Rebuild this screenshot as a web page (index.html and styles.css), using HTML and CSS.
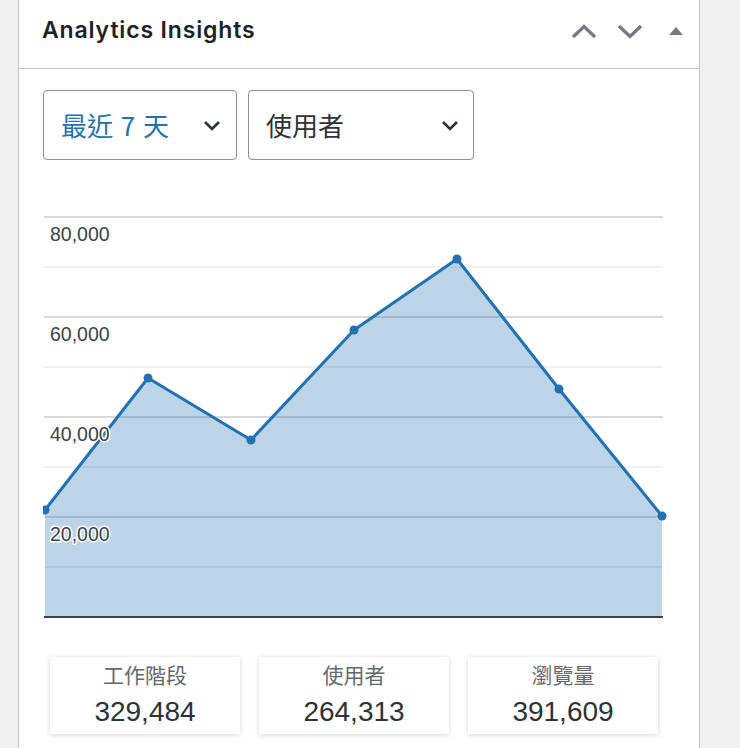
FILE: index.html
```html
<!DOCTYPE html>
<html lang="zh-Hant">
<head>
<meta charset="utf-8">
<title>Analytics Insights</title>
<link rel="stylesheet" href="styles.css">
</head>
<body>
<div class="widget">
  <div class="header">
    <h2 class="title">Analytics Insights</h2>
    <div class="actions">
      <button class="act" aria-label="上移">
        <svg width="26" height="15" viewBox="0 0 26 15"><polyline points="2,13 13,2.5 24,13" fill="none" stroke="#787c82" stroke-width="3.4"/></svg>
      </button>
      <button class="act" aria-label="下移">
        <svg width="26" height="15" viewBox="0 0 26 15"><polyline points="2,2 13,12.5 24,2" fill="none" stroke="#787c82" stroke-width="3.4"/></svg>
      </button>
      <button class="act" aria-label="收合">
        <svg width="16" height="10" viewBox="0 0 16 10"><polygon points="1,9 8,1 15,9" fill="#787c82"/></svg>
      </button>
    </div>
  </div>
  <div class="content">
    <div class="filters">
      <div class="select select-range">
        <span class="select-text blue">最近 7 天</span>
        <svg class="chev" width="18" height="11" viewBox="0 0 18 11"><polyline points="2,2 9,9 16,2" fill="none" stroke="#2c3338" stroke-width="2.6"/></svg>
      </div>
      <div class="select select-metric">
        <span class="select-text">使用者</span>
        <svg class="chev" width="18" height="11" viewBox="0 0 18 11"><polyline points="2,2 9,9 16,2" fill="none" stroke="#2c3338" stroke-width="2.6"/></svg>
      </div>
    </div>
    <svg class="chart" width="630" height="450" viewBox="43 180 630 450">
      <g stroke-width="1.6">
        <line x1="44" y1="217" x2="663" y2="217" stroke="#cccccc"/>
        <line x1="44" y1="267" x2="663" y2="267" stroke="#ebebeb"/>
        <line x1="44" y1="317" x2="663" y2="317" stroke="#cccccc"/>
        <line x1="44" y1="367" x2="663" y2="367" stroke="#ebebeb"/>
        <line x1="44" y1="417" x2="663" y2="417" stroke="#cccccc"/>
        <line x1="44" y1="467" x2="663" y2="467" stroke="#ebebeb"/>
        <line x1="44" y1="517" x2="663" y2="517" stroke="#cccccc"/>
        <line x1="44" y1="567" x2="663" y2="567" stroke="#ebebeb"/>
      </g>
      <polygon points="45,617 45,510 148,378 251,440 354,330 457,259 559,389 662,516 662,617" fill="#2271b1" fill-opacity="0.3"/>
      <polyline points="45,510 148,378 251,440 354,330 457,259 559,389 662,516" fill="none" stroke="#2271b1" stroke-width="3" stroke-linejoin="round"/>
      <g fill="#2271b1">
        <circle cx="45" cy="510" r="4.5"/>
        <circle cx="148" cy="378" r="4.5"/>
        <circle cx="251" cy="440" r="4.5"/>
        <circle cx="354" cy="330" r="4.5"/>
        <circle cx="457" cy="259" r="4.5"/>
        <circle cx="559" cy="389" r="4.5"/>
        <circle cx="662" cy="516" r="4.5"/>
      </g>
      <line x1="44" y1="617" x2="663" y2="617" stroke="#3c434a" stroke-width="2"/>
      <g class="axis">
        <text x="50" y="240.5">80,000</text>
        <text x="50" y="340.5">60,000</text>
        <text x="50" y="440.5">40,000</text>
        <text x="50" y="540.5">20,000</text>
      </g>
    </svg>
    <div class="stats">
      <div class="stat">
        <div class="stat-label">工作階段</div>
        <div class="stat-value">329,484</div>
      </div>
      <div class="stat">
        <div class="stat-label">使用者</div>
        <div class="stat-value">264,313</div>
      </div>
      <div class="stat">
        <div class="stat-label">瀏覽量</div>
        <div class="stat-value">391,609</div>
      </div>
    </div>
  </div>
</div>
</body>
</html>
```

FILE: styles.css
```css
* { box-sizing: border-box; }

html, body {
  margin: 0;
  padding: 0;
  background: #f0f0f1;
  font-family: "Inter", "Noto Sans CJK TC", sans-serif;
  overflow: hidden;
}

.widget {
  margin-left: 18px;
  width: 682px;
  min-height: 780px;
  background: #ffffff;
  border-left: 1px solid #c3c4c7;
  border-right: 1px solid #c3c4c7;
}

.header {
  height: 69px;
  display: flex;
  align-items: flex-start;
  padding: 18px 0 0 23px;
  border-bottom: 1px solid #c3c4c7;
}

.title {
  margin: 0;
  font-family: "Inter", sans-serif;
  font-weight: 600;
  font-size: 23px;
  line-height: 24px;
  color: #1d2327;
  letter-spacing: 0.85px;
}

.actions {
  margin-left: auto;
  display: flex;
  margin-top: 1px;
}

.act {
  width: 46px;
  height: 24px;
  padding: 0;
  border: 0;
  background: transparent;
  display: flex;
  align-items: center;
  justify-content: center;
}

.content {
  padding: 21px 24px 0;
}

.filters {
  display: flex;
  gap: 11px;
}

.select {
  height: 70px;
  border: 1px solid #8c8f94;
  border-radius: 4px;
  display: flex;
  align-items: center;
  padding-left: 17px;
  background: #fff;
}

.select-range { width: 194px; padding-right: 15px; }
.select-metric { width: 226px; padding-right: 14px; }

.select-text {
  font-family: "Noto Sans CJK TC", sans-serif;
  font-size: 26px;
  line-height: 30px;
  color: #2c3338;
}

.select-text.blue {
  color: #2271b1;
  word-spacing: 2px;
}

.chev {
  margin-left: auto;
  display: block;
}

.chart {
  display: block;
  margin-top: 20px;
}

.axis text {
  font-family: "Liberation Sans", sans-serif;
  font-size: 19.5px;
  fill: #3c434a;
  stroke: #ffffff;
  stroke-width: 3px;
  paint-order: stroke;
  stroke-linejoin: round;
}

.stats {
  display: flex;
  gap: 19px;
  margin: 27px 0 0 7px;
}

.stat {
  width: 190px;
  height: 77px;
  background: #fff;
  box-shadow: 0 1px 5px rgba(0, 0, 0, 0.16);
  text-align: center;
  padding-top: 4px;
}

.stat-label {
  font-family: "Noto Sans CJK TC", sans-serif;
  font-size: 21px;
  line-height: 26px;
  color: #646970;
}

.stat-value {
  margin-top: 8px;
  font-family: "Liberation Sans", sans-serif;
  font-size: 28px;
  line-height: 34px;
  color: #2c3338;
}
```
